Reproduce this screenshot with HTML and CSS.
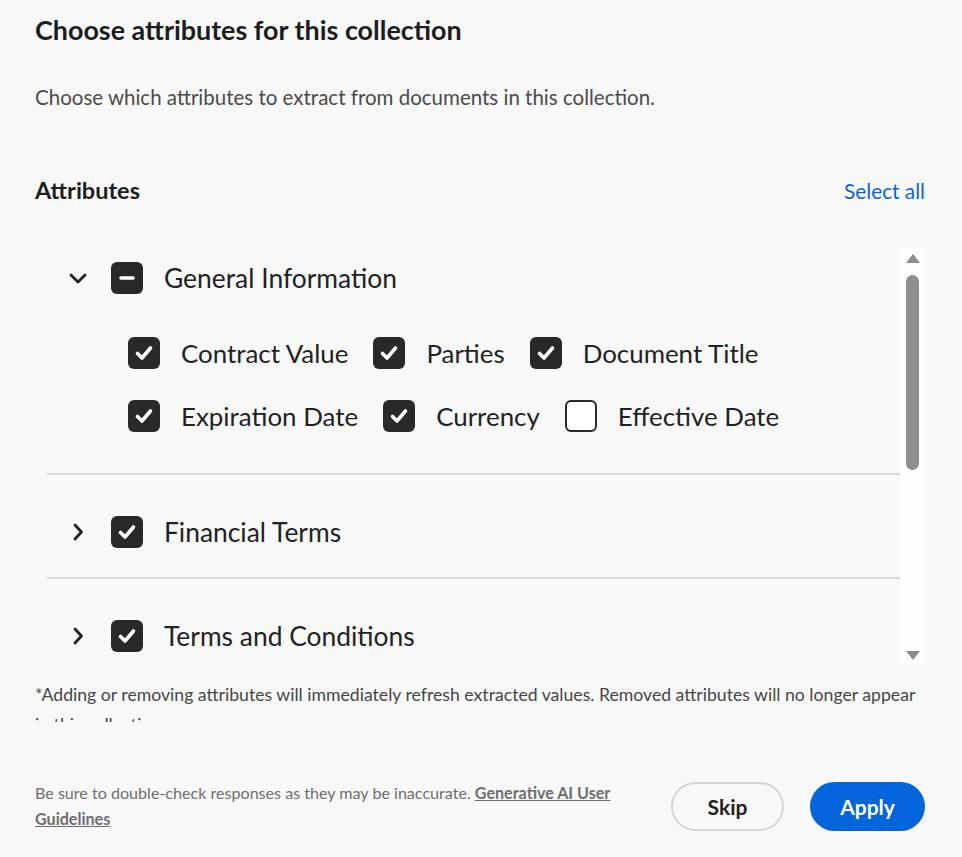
FILE: index.html
```html
<!DOCTYPE html>
<html lang="en">
<head>
    <meta charset="UTF-8">
    <title>Choose attributes</title>
    <link rel="stylesheet" href="styles.css">
</head>
<body>
<div class="dialog">
    <h1 class="title">Choose attributes for this collection</h1>
    <p class="desc">Choose which attributes to extract from documents in this collection.</p>

    <div class="attr-head">
        <h2>Attributes</h2>
        <a href="#" class="select-all">Select all</a>
    </div>

    <div class="scroll-box">
        <div class="group-list">
            <!-- expanded group -->
            <div class="group first">
                <div class="group-head">
                    <svg class="chevron" viewBox="0 0 20 20"><polyline points="3,7 10,14 17,7"/></svg>
                    <span class="cb mixed"><svg viewBox="0 0 32 32"><line x1="10" y1="16" x2="22" y2="16"/></svg></span>
                    <span class="group-label">General Information</span>
                </div>
                <div class="children">
                    <div class="attr-row">
                        <label class="attr"><span class="cb on"><svg viewBox="0 0 32 32"><polyline points="9.5,16.5 14,21 22.5,11"/></svg></span>Contract Value</label>
                        <label class="attr"><span class="cb on"><svg viewBox="0 0 32 32"><polyline points="9.5,16.5 14,21 22.5,11"/></svg></span>Parties</label>
                        <label class="attr"><span class="cb on"><svg viewBox="0 0 32 32"><polyline points="9.5,16.5 14,21 22.5,11"/></svg></span>Document Title</label>
                    </div>
                    <div class="attr-row">
                        <label class="attr"><span class="cb on"><svg viewBox="0 0 32 32"><polyline points="9.5,16.5 14,21 22.5,11"/></svg></span>Expiration Date</label>
                        <label class="attr"><span class="cb on"><svg viewBox="0 0 32 32"><polyline points="9.5,16.5 14,21 22.5,11"/></svg></span>Currency</label>
                        <label class="attr"><span class="cb off"></span>Effective Date</label>
                    </div>
                </div>
            </div>

            <div class="group">
                <div class="group-head">
                    <svg class="chevron" viewBox="0 0 20 20"><polyline points="7,3 13.5,10 7,17"/></svg>
                    <span class="cb on"><svg viewBox="0 0 32 32"><polyline points="9.5,16.5 14,21 22.5,11"/></svg></span>
                    <span class="group-label">Financial Terms</span>
                </div>
            </div>

            <div class="group">
                <div class="group-head">
                    <svg class="chevron" viewBox="0 0 20 20"><polyline points="7,3 13.5,10 7,17"/></svg>
                    <span class="cb on"><svg viewBox="0 0 32 32"><polyline points="9.5,16.5 14,21 22.5,11"/></svg></span>
                    <span class="group-label">Terms and Conditions</span>
                </div>
            </div>

            <div class="group">
                <div class="group-head">
                    <svg class="chevron" viewBox="0 0 20 20"><polyline points="7,3 13.5,10 7,17"/></svg>
                    <span class="cb on"><svg viewBox="0 0 32 32"><polyline points="9.5,16.5 14,21 22.5,11"/></svg></span>
                    <span class="group-label">Obligations</span>
                </div>
            </div>
        </div>

        <!-- scrollbar drawn by hand -->
        <div class="scrollbar">
            <span class="arrow up"></span>
            <div class="track"><div class="thumb"></div></div>
            <span class="arrow down"></span>
        </div>
    </div>

    <p class="footnote">*Adding or removing attributes will immediately refresh extracted values. Removed attributes will no longer appear in this collection.</p>

    <div class="footer">
        <p class="disclaimer">Be sure to double-check responses as they may be inaccurate. <a href="#">Generative AI User Guidelines</a></p>
        <div class="buttons">
            <button class="btn skip">Skip</button>
            <button class="btn apply">Apply</button>
        </div>
    </div>
</div>
</body>
</html>
```

FILE: styles.css
```css
body {
    margin: 0;
    background-color: #f8f8f8;
    font-family: Lato, "Open Sans", sans-serif;
    color: #222;
}

.dialog {
    padding: 14px 37px 0 35px;
}

.title {
    margin: 0;
    font-size: 26.9px;
    line-height: 32px;
    font-weight: 700;
    color: #1d1d1d;
}

.desc {
    margin: 38px 0 0;
    font-size: 20.5px;
    line-height: 26px;
    color: #4b4b4b;
}

.attr-head {
    margin-top: 65px;
    display: flex;
    justify-content: space-between;
    align-items: center;
    height: 30px;
}

.attr-head h2 {
    margin: 0;
    font-size: 23.5px;
    font-weight: 700;
    color: #1d1d1d;
}

.select-all {
    font-size: 20.8px;
    color: #0d66d0;
    text-decoration: none;
}

/* scrolling list of groups */
.scroll-box {
    margin: 43px 0 0 12px;
    height: 417px;
    display: flex;
}

.group-list {
    flex: 1;
    overflow: hidden;
}

.group {
    padding: 36px 0 24px;
    border-bottom: 2px solid #dadada;
}

.group.first {
    padding-top: 9px;
}

.group-head {
    height: 42px;
    display: flex;
    align-items: center;
    padding-left: 21px;
}

.chevron {
    width: 20px;
    height: 20px;
    margin-right: 23px;
    fill: none;
    stroke: #222;
    stroke-width: 2.8;
    stroke-linecap: round;
    stroke-linejoin: round;
}

.group-label {
    margin-left: 21px;
    font-size: 26.4px;
    color: #222;
}

.cb {
    width: 32px;
    height: 32px;
    box-sizing: border-box;
    border-radius: 6px;
    flex-shrink: 0;
    display: inline-block;
}

.cb svg {
    width: 32px;
    height: 32px;
    display: block;
    fill: none;
    stroke: #fff;
    stroke-width: 3.6;
    stroke-linecap: round;
    stroke-linejoin: round;
}

.cb.on,
.cb.mixed {
    background-color: #292929;
}

.cb.off {
    border: 2.5px solid #292929;
    background-color: #fff;
}

.children {
    padding: 33px 0 12px 81px;
    display: flex;
    flex-direction: column;
    gap: 21px;
}

.attr-row {
    display: flex;
    gap: 25px;
}

.attr {
    height: 42px;
    display: flex;
    align-items: center;
    gap: 21px;
    font-size: 25.9px;
    color: #222;
}

.scrollbar {
    width: 25px;
    background-color: #fdfdfd;
    display: flex;
    flex-direction: column;
    align-items: center;
    padding: 6px 0 5px;
    box-sizing: border-box;
}

.arrow {
    width: 0;
    height: 0;
    border-left: 7px solid transparent;
    border-right: 7px solid transparent;
}

.arrow.up {
    border-bottom: 9px solid #8c8c8c;
}

.arrow.down {
    border-top: 9px solid #8c8c8c;
}

.track {
    flex: 1;
    width: 13px;
    padding: 12px 0;
}

.thumb {
    height: 195px;
    background-color: #8f8f8f;
    border-radius: 7px;
}

.footnote {
    margin: 15px 0 0;
    height: 42px;
    overflow: hidden;
    font-size: 17.65px;
    line-height: 30px;
    color: #464646;
}

.footer {
    margin-top: 58px;
    display: flex;
    align-items: center;
}

.disclaimer {
    flex: 1;
    margin: 0 50px 0 0;
    font-size: 16.1px;
    line-height: 26px;
    color: #6e6e6e;
}

.disclaimer a {
    color: #6e6e6e;
    font-weight: 700;
}

.buttons {
    display: flex;
    gap: 26px;
}

.btn {
    height: 49px;
    border-radius: 25px;
    font-family: Lato, "Open Sans", sans-serif;
    font-size: 21px;
    font-weight: 700;
    cursor: pointer;
}

.skip {
    width: 113px;
    background-color: #f8f8f8;
    border: 2px solid #d5d5d5;
    color: #222;
}

.apply {
    width: 115px;
    background-color: #0265dc;
    border: none;
    color: #fff;
}
```
